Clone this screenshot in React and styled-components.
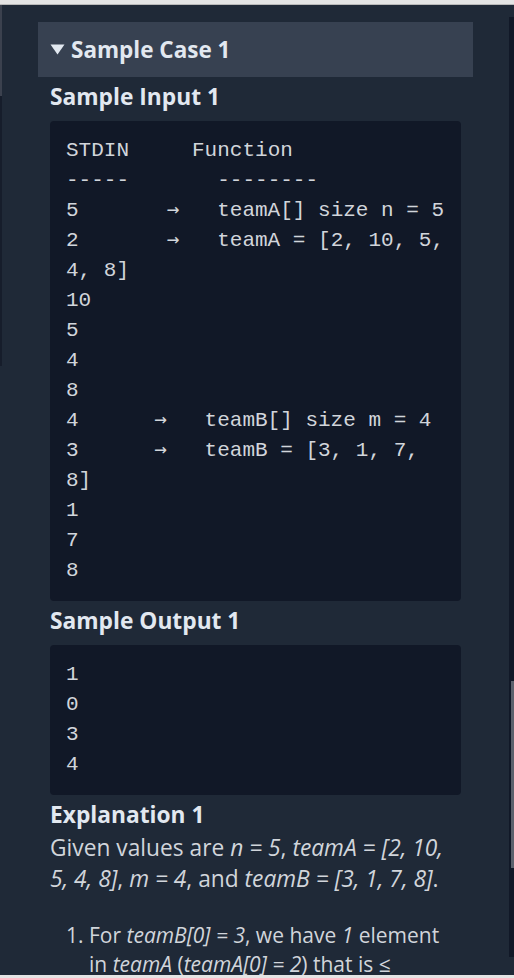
import React from "react";
import styled, { createGlobalStyle } from "styled-components";

const GlobalStyle = createGlobalStyle`
    html, body {
        margin: 0;
        padding: 0;
        overflow: hidden;
        background: #1f2937;
    }
`

const Shell = styled.div`
    height: 978px;
    display: flex;
    flex-direction: column;
    background: #1f2937;
    font-family: "Open Sans", "Noto Sans", sans-serif;
`

const EdgeBar = styled.div`
    flex: none;
    height: ${p => p.$h}px;
    background: #e4e4e4;
    border-bottom: ${p => p.$line ? "1px solid #b9b9b9" : "none"};
`

const Body = styled.div`
    flex: 1;
    min-height: 0;
    display: flex;
`

const LeftRail = styled.div`
    flex: none;
    width: 2px;
    display: flex;
    flex-direction: column;
`

const RailPiece = styled.div`
    height: ${p => p.$h}px;
    background: ${p => p.$color};
`

const Main = styled.main`
    flex: 1;
    min-width: 0;
    overflow: hidden;
    padding: 17px 36px 0;
`

const Track = styled.div`
    flex: none;
    width: 5px;
    margin: 12px 0 18px;
    background: #111827;
    display: flex;
    flex-direction: column;
    align-items: flex-end;
`

const Thumb = styled.div`
    width: 3px;
    height: ${p => p.$h}px;
    margin-top: ${p => p.$top}px;
    background: #5b616d;
`

const Summary = styled.div`
    height: 55px;
    display: flex;
    align-items: center;
    gap: 6px;
    padding: 0 12px;
    background: #374151;
    color: #e2e8f0;
    font-size: 22.5px;
    font-weight: 700;
`

const Content = styled.div`
    padding: 0 12px;
`

const Heading = styled.h3`
    margin: 6px 0 0;
    font-size: 22.75px;
    line-height: 28px;
    font-weight: 700;
    color: #e2e8f0;
`

const Code = styled.pre`
    margin: 10px 0 0;
    padding: 15px 16px;
    background: #111827;
    border-radius: 4px;
    color: #d1d5db;
    font-family: "Liberation Mono", "DejaVu Sans Mono", monospace;
    font-size: 21px;
    line-height: 30px;
    white-space: pre-wrap;
`

const Arrow = styled.span`
    font-family: "DejaVu Sans Mono", monospace;
    font-size: 20.9px;
    line-height: 0;
`

const Para = styled.p`
    margin: 4px 0 0;
    font-size: 22.75px;
    line-height: 30.5px;
    color: #d1d5db;
`

const Steps = styled.ol`
    margin: 27px 0 0;
    padding-left: 39px;
    font-size: 21px;
    line-height: 28.5px;
    color: #d1d5db;
`

const Caret = () => (
    <svg width="15" height="11" viewBox="0 0 15 11">
        <polygon points="0.5,0.5 14.5,0.5 7.5,10.5" fill="#e2e8f0" />
    </svg>
)

const App = () => {
    return (
        <Shell>
            <GlobalStyle />
            <EdgeBar $h={4} $line />
            <Body>
                <LeftRail>
                    <RailPiece $h={91} $color="#3b414e" />
                    <RailPiece $h={270} $color="#161d2b" />
                </LeftRail>

                <Main>
                    {/* collapsible sample case */}
                    <Summary>
                        <Caret />
                        <span>Sample Case 1</span>
                    </Summary>
                    <Content>
                        <Heading>Sample Input 1</Heading>
                        <Code>
                            {"STDIN     Function\n-----       --------\n"}
                            {"5       "}<Arrow>→</Arrow>{"   teamA[] size n = 5\n"}
                            {"2       "}<Arrow>→</Arrow>{"   teamA = [2, 10, 5, 4, 8]\n"}
                            {"10\n5\n4\n8\n"}
                            {"4      "}<Arrow>→</Arrow>{"   teamB[] size m = 4\n"}
                            {"3      "}<Arrow>→</Arrow>{"   teamB = [3, 1, 7, 8]\n"}
                            {"1\n7\n8"}
                        </Code>

                        <Heading>Sample Output 1</Heading>
                        <Code>{"1\n0\n3\n4"}</Code>

                        <Heading>Explanation 1</Heading>
                        <Para>
                            Given values are <i>n = 5</i>, <i>teamA = [2, 10, 5, 4, 8]</i>, <i>m = 4</i>, and <i>teamB = [3, 1, 7, 8]</i>.
                        </Para>
                        <Steps>
                            <li>
                                For <i>teamB[0] = 3</i>, we have <i>1</i> element in <i>teamA</i> (<i>teamA[0] = 2</i>) that is ≤ <i>teamB[0]</i>.
                            </li>
                            <li>
                                For <i>teamB[1] = 1</i>, we have <i>0</i> elements in <i>teamA</i> that are ≤ <i>teamB[1]</i>.
                            </li>
                        </Steps>
                    </Content>
                </Main>

                <Track>
                    <Thumb $top={664} $h={187} />
                </Track>
            </Body>
            <EdgeBar $h={3} />
        </Shell>
    );
}

export default App;
